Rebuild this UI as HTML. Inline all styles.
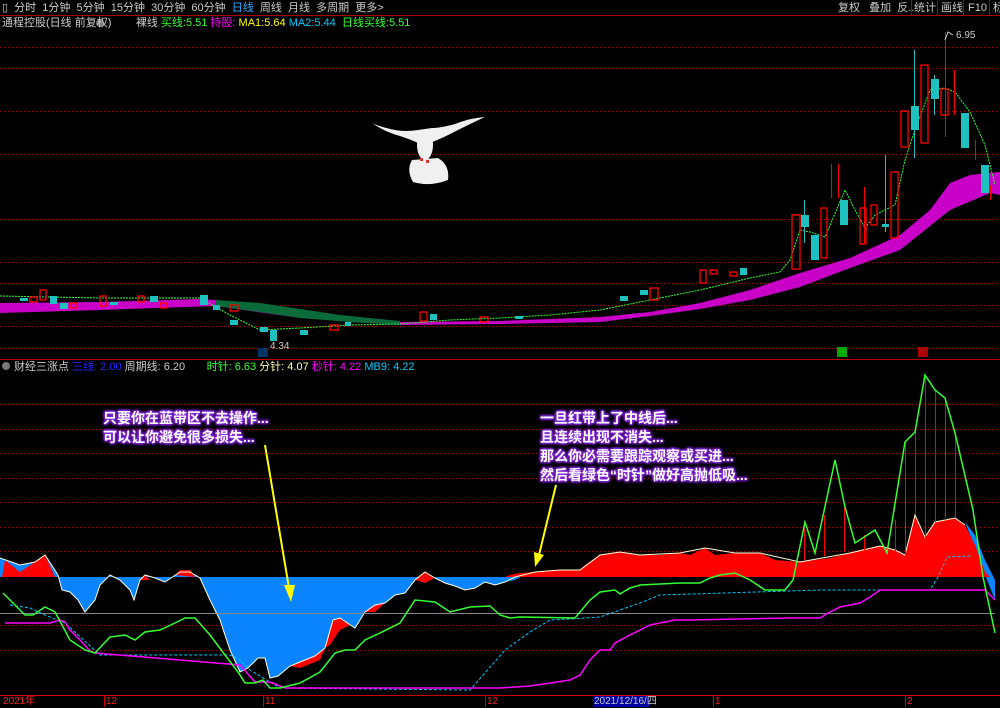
<!DOCTYPE html>
<html><head><meta charset="utf-8">
<style>
html,body{margin:0;padding:0;background:#000;}
body{width:1000px;height:707px;position:relative;overflow:hidden;font-family:"Liberation Sans","Noto Sans CJK SC",sans-serif;}
.t{position:absolute;font-size:11px;white-space:nowrap;line-height:12px;}
.note{position:absolute;color:#fff;font-weight:bold;font-size:14px;line-height:19px;white-space:nowrap;
text-shadow:0 0 2px #8a2be2,0 0 3px #8a2be2,1px 1px 2px #7b1fd0,-1px -1px 2px #7b1fd0,1px -1px 2px #7b1fd0,-1px 1px 2px #7b1fd0;}
</style></head><body>
<svg width="1000" height="707" style="position:absolute;left:0;top:0">
<line x1="0" y1="15.5" x2="1000" y2="15.5" stroke="#a00" />
<line x1="0" y1="359.5" x2="1000" y2="359.5" stroke="#b00" />
<line x1="0" y1="695.5" x2="1000" y2="695.5" stroke="#c00" />
<g stroke="#a00" stroke-width="1">
<line x1="911.5" y1="0" x2="911.5" y2="15"/><line x1="937.5" y1="0" x2="937.5" y2="15"/><line x1="963.5" y1="0" x2="963.5" y2="15"/><line x1="989.5" y1="0" x2="989.5" y2="15"/>
</g>
<g stroke="#b00" stroke-dasharray="1,3" stroke-width="1">
<line x1="0" y1="47.5" x2="1000" y2="47.5"/><line x1="0" y1="68.5" x2="1000" y2="68.5"/>
<line x1="0" y1="111.5" x2="1000" y2="111.5"/><line x1="0" y1="154.5" x2="1000" y2="154.5"/>
<line x1="0" y1="219.5" x2="1000" y2="219.5"/><line x1="0" y1="262.5" x2="1000" y2="262.5"/>
<line x1="0" y1="283.5" x2="1000" y2="283.5"/><line x1="0" y1="305.5" x2="1000" y2="305.5"/>
<line x1="0" y1="326.5" x2="1000" y2="326.5"/><line x1="0" y1="348.5" x2="1000" y2="348.5"/>
<line x1="0" y1="404.5" x2="1000" y2="404.5"/><line x1="0" y1="429.5" x2="1000" y2="429.5"/>
<line x1="0" y1="453.5" x2="1000" y2="453.5"/><line x1="0" y1="478.5" x2="1000" y2="478.5"/>
<line x1="0" y1="502.5" x2="1000" y2="502.5"/><line x1="0" y1="527.5" x2="1000" y2="527.5"/>
<line x1="0" y1="551.5" x2="1000" y2="551.5"/><line x1="0" y1="625.5" x2="1000" y2="625.5"/>
<line x1="0" y1="650.5" x2="1000" y2="650.5"/>
</g>
<polygon fill="#c800c8" points="0,303 100,302 200,299 215,300 300,312 400,322 500,321 600,317 650,312 700,303 750,290 800,273 850,258 900,235 930,210 950,183 970,175 1000,172 1000,195 990,193 950,210 900,250 850,268 800,287 750,300 700,309 650,316 600,322 500,324 400,325 300,318 215,306 100,310 0,313"/>
<polygon fill="#0a6b3a" points="215,300 260,303 300,309 340,315 400,321 400,325 350,322 300,318 260,312 215,306"/>
<polyline fill="none" stroke="#3f3" stroke-width="1" stroke-dasharray="2,1" points="0,296 100,298 200,298 230,315 260,330 300,328 350,325 400,324 450,320 500,318 550,315 600,310 650,300 700,290 750,278 780,272 790,260 800,230 810,232 825,237 845,190 855,210 865,228 875,215 895,205 905,160 915,130 930,90 945,88 955,92 970,112 985,145 995,185"/>
<g fill="none" stroke="#f00" stroke-width="1.3">
<rect x="30" y="297" width="7" height="5"/><rect x="40" y="290" width="6" height="10"/><rect x="70" y="303" width="7" height="5"/><rect x="100" y="296" width="6" height="10"/>
<rect x="138" y="296" width="6" height="6"/><rect x="160" y="303" width="7" height="5"/><rect x="230" y="305" width="8" height="6"/><rect x="330" y="325" width="8" height="5"/>
<rect x="420" y="312" width="7" height="9"/><rect x="480" y="317" width="8" height="5"/><rect x="650" y="288" width="8" height="12"/><rect x="700" y="270" width="6" height="13"/>
<rect x="710" y="270" width="7" height="4"/><rect x="730" y="272" width="7" height="4"/>
<rect x="792" y="215" width="8" height="54"/><rect x="821" y="208" width="6" height="50"/><rect x="860" y="208" width="6" height="36"/><rect x="871" y="205" width="6" height="20"/>
<rect x="891" y="172" width="7" height="66"/><rect x="901" y="111" width="7" height="36"/><rect x="921" y="65" width="7" height="78"/><rect x="941" y="89" width="7" height="26"/>
</g>
<g fill="#1ec0c0">
<rect x="20" y="298" width="8" height="3"/><rect x="50" y="296" width="7" height="8"/><rect x="60" y="303" width="8" height="6"/><rect x="110" y="302" width="8" height="3"/>
<rect x="150" y="296" width="8" height="6"/><rect x="200" y="295" width="8" height="10"/><rect x="213" y="305" width="7" height="5"/><rect x="230" y="320" width="8" height="5"/>
<rect x="260" y="327" width="8" height="5"/><rect x="270" y="330" width="7" height="11"/><rect x="300" y="330" width="8" height="5"/><rect x="345" y="322" width="6" height="4"/>
<rect x="430" y="314" width="7" height="6"/><rect x="515" y="316" width="8" height="3"/><rect x="620" y="296" width="8" height="5"/><rect x="640" y="290" width="8" height="5"/>
<rect x="740" y="268" width="7" height="7"/><rect x="801" y="215" width="8" height="12"/><rect x="811" y="235" width="8" height="25"/><rect x="840" y="200" width="8" height="25"/>
<rect x="882" y="224" width="7" height="3"/><rect x="911" y="106" width="8" height="24"/><rect x="931" y="79" width="8" height="20"/><rect x="961" y="113" width="8" height="35"/><rect x="981" y="165" width="8" height="28"/>
</g>
<g stroke="#1ec0c0" stroke-width="1"><line x1="914.5" y1="50" x2="914.5" y2="158"/><line x1="885.5" y1="155" x2="885.5" y2="232"/><line x1="804.5" y1="200" x2="804.5" y2="243"/><line x1="934.5" y1="75" x2="934.5" y2="115"/></g>
<g stroke="#f00" stroke-width="1"><line x1="945.5" y1="32" x2="945.5" y2="137"/><line x1="954.5" y1="70" x2="954.5" y2="115"/><line x1="831.5" y1="164" x2="831.5" y2="198"/><line x1="838.5" y1="164" x2="838.5" y2="198"/><line x1="864.5" y1="187" x2="864.5" y2="243"/><line x1="975.5" y1="140" x2="975.5" y2="160"/><line x1="990.5" y1="185" x2="990.5" y2="200"/></g>
<polyline points="945,40 948,32 953,35" fill="none" stroke="#ccc"/>
<!-- dove -->
<g fill="#f0f0f0">
<path d="M372,123 Q385,132 400,136 Q412,140 418,143 L430,143 Q445,137 458,130 Q474,122 485,117 Q470,118 455,124 Q440,128 432,128 L418,130 Q405,132 395,130 Q380,127 372,123Z"/>
<ellipse cx="425" cy="145" rx="8" ry="15"/>
<path d="M412,160 L438,158 Q450,165 448,180 Q430,187 413,182 Q406,170 412,160Z"/>
</g>
<rect x="420" y="158" width="3" height="3" fill="#d33"/><rect x="426" y="160" width="3" height="3" fill="#d33"/>
<!-- lower panel -->
<polygon fill="#0a84ff" points="0,577 0,558 20,565 35,562 45,555 58,575 62,590 70,592 78,600 85,612 95,600 100,585 110,575 120,580 130,590 134,600 140,580 145,575 155,578 165,582 180,572 190,572 200,578 210,600 220,620 230,650 240,672 248,668 258,658 265,658 270,678 278,676 290,666 300,662 315,656 325,648 333,620 340,618 355,628 365,612 375,605 385,603 395,595 405,593 415,580 425,572 435,578 445,583 455,586 465,590 475,588 485,582 495,585 505,582 515,580 520,577"/>
<polygon fill="#f00" points="2,577 5,560 20,572 35,562 45,555 55,577"/>
<polygon fill="#f00" points="325,648 333,620 340,618 350,625 340,630 330,645"/>
<polygon fill="#f00" points="290,666 300,662 315,656 325,648 320,660 300,668"/>
<polygon fill="#f00" points="365,612 375,605 385,603 375,612"/>
<polygon fill="#f00" points="415,580 425,572 435,578 425,583"/>
<polygon fill="#f00" points="140,580 145,575 150,580"/>
<polygon fill="#f00" points="175,575 180,570 190,570 195,577"/>
<polygon fill="#0a84ff" points="965,522 975,535 985,560 995,580 995,600 985,575 975,548"/>
<polygon fill="#f00" points="505,577 510,575 520,573 535,572 560,570 580,570 585,565 600,555 620,552 640,555 660,555 680,553 690,555 705,548 715,555 735,553 760,553 775,560 800,562 830,558 850,553 860,550 880,546 895,550 905,555 915,515 925,537 935,522 955,518 965,525 975,545 985,572 990,577"/>
<polyline fill="none" stroke="#ffd" stroke-width="1" points="0,558 20,565 35,562 45,555 58,575 62,590 70,592 78,600 85,612 95,600 100,585 110,575 120,580 130,590 134,600 140,580 145,575 155,578 165,582 180,572 190,572 200,578 210,600 220,620 230,650 240,672 248,668 258,658 265,658 270,678 278,676 290,666 300,662 315,656 325,648 333,620 340,618 355,628 365,612 375,605 385,603 395,595 405,593 415,580 425,572 435,578 445,583 455,586 465,590 475,588 485,582 495,585 505,582 515,577 535,572 560,570 580,570 600,555 620,552 640,555 680,553 705,548 735,553 760,553 800,562 850,553 880,546 895,550 905,555 915,515 925,537 935,522 955,518 965,525"/>
<line x1="0" y1="613.5" x2="995" y2="613.5" stroke="#888"/>
<g stroke="#f00" stroke-width="1"><line x1="804.5" y1="522" x2="804.5" y2="560"/><line x1="824.5" y1="515" x2="824.5" y2="556"/><line x1="844.5" y1="505" x2="844.5" y2="552"/><line x1="864.5" y1="535" x2="864.5" y2="550"/><line x1="895.5" y1="520" x2="895.5" y2="552"/><line x1="905.5" y1="442" x2="905.5" y2="555"/><line x1="915.5" y1="432" x2="915.5" y2="515"/><line x1="925.5" y1="375" x2="925.5" y2="537"/><line x1="935.5" y1="390" x2="935.5" y2="522"/><line x1="945.5" y1="398" x2="945.5" y2="520"/><line x1="955.5" y1="433" x2="955.5" y2="518"/></g>
<polyline fill="none" stroke="#0cf" stroke-width="1" stroke-dasharray="3,2" points="10,605 30,608 45,615 65,623 100,655 230,655 240,660 250,670 280,688 470,690 505,650 530,632 550,620 570,619 600,617 620,610 640,603 660,595 820,590 930,590 938,577 947,557 972,556"/>
<polyline fill="none" stroke="#f0f" stroke-width="1.5" points="5,623 50,623 60,620 65,622 70,630 80,640 90,651 95,653 240,665 255,682 270,682 285,688 435,688 500,688 530,686 550,683 570,680 580,675 590,660 600,650 610,650 615,643 630,635 650,625 675,620 690,620 790,618 820,618 830,612 840,607 860,603 870,597 880,590 985,590 995,600"/>
<polyline fill="none" stroke="#3f3" stroke-width="1.5" points="3,593 15,605 25,615 33,615 45,607 55,612 62,625 70,640 85,650 95,653 110,637 125,635 135,640 145,632 160,630 175,623 185,618 195,618 210,635 225,655 238,672 245,683 255,683 263,680 270,688 280,688 300,683 320,672 335,653 345,650 355,650 365,640 380,633 400,623 415,600 435,602 450,612 470,607 490,606 500,615 510,618 520,617 575,618 590,600 600,592 615,590 620,594 630,588 640,585 680,583 700,583 710,578 720,575 735,573 750,580 765,590 785,590 793,580 805,522 815,553 835,460 845,507 855,543 875,530 887,553 905,442 915,432 925,375 935,390 945,398 955,433 973,510 983,577 995,633"/>
<g stroke="#ff0" stroke-width="2" fill="#ff0">
<line x1="265" y1="445" x2="289" y2="588"/><polygon points="284,585 295,585 291,602" stroke="none"/>
<line x1="556" y1="485" x2="539" y2="555"/><polygon points="534,552 544,555 535,567" stroke="none"/>
</g>
<g stroke="#c00"><line x1="104.5" y1="695" x2="104.5" y2="707"/><line x1="263.5" y1="695" x2="263.5" y2="707"/><line x1="485.5" y1="695" x2="485.5" y2="707"/><line x1="713.5" y1="695" x2="713.5" y2="707"/><line x1="905.5" y1="695" x2="905.5" y2="707"/></g>
<rect x="593" y="696" width="57" height="11" fill="#0000a0"/>
<rect x="837" y="347" width="10" height="10" fill="#0a0"/><rect x="918" y="347" width="10" height="10" fill="#a00"/>
<rect x="258" y="348" width="10" height="9" fill="#036"/>
<circle cx="100" cy="23" r="4" fill="#777"/><circle cx="6" cy="366" r="4" fill="#777"/>
</svg>
<div class="t" style="left:2px;top:2px;color:#ccc">▯&nbsp; 分时&nbsp; 1分钟&nbsp; 5分钟&nbsp; 15分钟&nbsp; 30分钟&nbsp; 60分钟&nbsp; <span style="color:#3af">日线</span>&nbsp; 周线&nbsp; 月线&nbsp; 多周期&nbsp; 更多&gt;</div>
<div class="t" style="left:838px;top:2px;color:#ccc">复权&nbsp;&nbsp; 叠加&nbsp; 反..</div>
<div class="t" style="left:914px;top:2px;color:#ccc">统计</div>
<div class="t" style="left:941px;top:2px;color:#ccc">画线</div>
<div class="t" style="left:968px;top:2px;color:#ccc">F10</div>
<div class="t" style="left:993px;top:2px;color:#ccc">标</div>
<div class="t" style="left:2px;top:17px;color:#ccc">通程控股(日线 前复权)&nbsp; &nbsp;&nbsp;&nbsp;&nbsp;&nbsp; 裸线 <span style="color:#3f3">买线:5.51</span> <span style="color:#f0f">持股:</span> <span style="color:#ff0">MA1:5.64</span> <span style="color:#0cf">MA2:5.44</span>&nbsp; <span style="color:#3f3">日线买线:5.51</span></div>
<div class="t" style="left:270px;top:341px;color:#ccc;font-size:10px">4.34</div>
<div class="t" style="left:956px;top:30px;color:#ccc;font-size:10px">6.95</div>
<div class="t" style="left:14px;top:361px;color:#ccc">财经三涨点 <span style="color:#22f">三线: 2.00</span> 周期线: 6.20&nbsp;&nbsp;&nbsp;&nbsp;&nbsp;&nbsp; <span style="color:#3f3">时针: 6.63</span> <span style="color:#ffa">分针: 4.07</span> <span style="color:#f0f">秒针: 4.22</span> <span style="color:#0cf">MB9: 4.22</span></div>
<div class="note" style="left:103px;top:409px">只要你在蓝带区不去操作...<br>可以让你避免很多损失...</div>
<div class="note" style="left:540px;top:409px">一旦红带上了中线后...<br>且连续出现不消失...<br>那么你必需要跟踪观察或买进...<br>然后看绿色“时针”做好高抛低吸...</div>
<div class="t" style="left:3px;top:696px;color:#e22;font-size:10px">2021年</div>
<div class="t" style="left:106px;top:696px;color:#e22;font-size:10px">12</div>
<div class="t" style="left:265px;top:696px;color:#e22;font-size:10px">11</div>
<div class="t" style="left:487px;top:696px;color:#e22;font-size:10px">12</div>
<div class="t" style="left:594px;top:696px;color:#ccc;font-size:10px">2021/12/16/四</div>
<div class="t" style="left:715px;top:696px;color:#e22;font-size:10px">1</div>
<div class="t" style="left:907px;top:696px;color:#e22;font-size:10px">2</div>
</body></html>
